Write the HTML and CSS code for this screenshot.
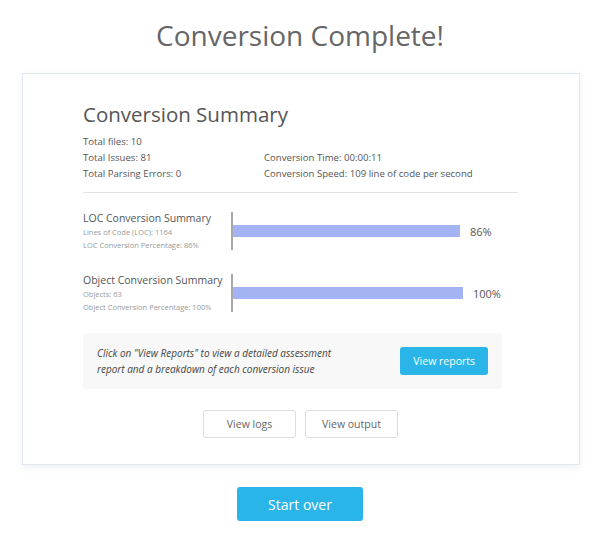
FILE: index.html
```html
<!DOCTYPE html>
<html lang="en">
<head>
  <meta charset="UTF-8">
  <title>Conversion Complete</title>
  <link rel="stylesheet" href="styles.css">
</head>
<body>
  <h1 class="page-title">Conversion Complete!</h1>

  <div class="card">
    <h2 class="card-title">Conversion Summary</h2>
    <div class="stats">
      <div class="stats-col">
        <p>Total files: 10</p>
        <p>Total Issues: 81</p>
        <p>Total Parsing Errors: 0</p>
      </div>
      <div class="stats-col stats-right">
        <p>Conversion Time: 00:00:11</p>
        <p>Conversion Speed: 109 line of code per second</p>
      </div>
    </div>

    <div class="chart-row">
      <div class="chart-info">
        <p class="chart-title">LOC Conversion Summary</p>
        <p class="chart-sub">Lines of Code (LOC): 1164</p>
        <p class="chart-sub">LOC Conversion Percentage: 86%</p>
      </div>
      <div class="chart-bar">
        <div class="bar" style="width: 227px"></div>
        <span class="bar-label">86%</span>
      </div>
    </div>

    <div class="chart-row">
      <div class="chart-info">
        <p class="chart-title">Object Conversion Summary</p>
        <p class="chart-sub">Objects: 63</p>
        <p class="chart-sub">Object Conversion Percentage: 100%</p>
      </div>
      <div class="chart-bar">
        <div class="bar" style="width: 230px"></div>
        <span class="bar-label">100%</span>
      </div>
    </div>

    <div class="report-box">
      <p>Click on "View Reports" to view a detailed assessment report and a breakdown of each conversion issue</p>
      <button class="btn-primary">View reports</button>
    </div>

    <div class="secondary-actions">
      <button class="btn-outline">View logs</button>
      <button class="btn-outline">View output</button>
    </div>
  </div>

  <div class="footer">
    <button class="btn-primary btn-large">Start over</button>
  </div>
</body>
</html>
```

FILE: styles.css
```css
body {
  margin: 0;
  font-family: 'Open Sans', sans-serif;
  background: #ffffff;
  color: #555;
}

p {
  margin: 0;
}

.page-title {
  margin: 0;
  padding-top: 16px;
  height: 57px;
  font-size: 28px;
  font-weight: 400;
  text-align: center;
  color: #666;
}

.card {
  width: 435px;
  margin: 0 auto 0 22px;
  padding: 24px 61px 26px 60px;
  border: 1px solid #e3e7ef;
  box-shadow: 0 2px 6px rgba(180, 190, 210, 0.25);
}

.card-title {
  margin: 0;
  font-size: 20.5px;
  font-weight: 400;
  color: #555;
  line-height: 32px;
}

.stats {
  display: flex;
  font-size: 9.6px;
  line-height: 16px;
  color: #555;
  padding: 4px 0 10px;
  border-bottom: 1px solid #e3e3e3;
}

.stats-col {
  width: 181px;
}

.stats-right {
  flex: 1;
  padding-top: 16px;
}

.chart-row {
  display: flex;
  align-items: center;
  margin-top: 17px;
}

.chart-row + .chart-row {
  margin-top: 20px;
}

.chart-info {
  width: 148px;
}

.chart-title {
  font-size: 10.5px;
  line-height: 16px;
  color: #555;
}

.chart-sub {
  font-size: 7.5px;
  line-height: 13px;
  color: #999;
}

.chart-bar {
  display: flex;
  align-items: center;
  height: 38px;
  border-left: 2px solid #aaa;
}

.bar {
  height: 12px;
  background: #a4b3f3;
}

.bar-label {
  margin-left: 10px;
  font-size: 11px;
  color: #555;
}

.report-box {
  display: flex;
  align-items: center;
  justify-content: space-between;
  width: 391px;
  margin-top: 19px;
  padding: 12px 14px;
  background: #f8f8f8;
  border-radius: 4px;
}

.report-box p {
  width: 252px;
  font-size: 10px;
  line-height: 16px;
  font-style: italic;
  color: #444;
}

button {
  font-family: 'Open Sans', sans-serif;
  cursor: pointer;
}

.btn-primary {
  height: 28px;
  padding: 0 13px;
  border: none;
  border-radius: 3px;
  background: #29b5e8;
  color: #fff;
  font-size: 10.5px;
}

.secondary-actions {
  display: flex;
  justify-content: center;
  gap: 9px;
  width: 435px;
  margin-top: 21px;
}

.btn-outline {
  height: 28px;
  width: 93px;
  border: 1px solid #ddd;
  border-radius: 3px;
  background: #fff;
  color: #666;
  font-size: 10.5px;
}

.footer {
  display: flex;
  justify-content: center;
  margin-top: 22px;
}

.btn-large {
  height: 34px;
  width: 126px;
  font-size: 14px;
}
```
